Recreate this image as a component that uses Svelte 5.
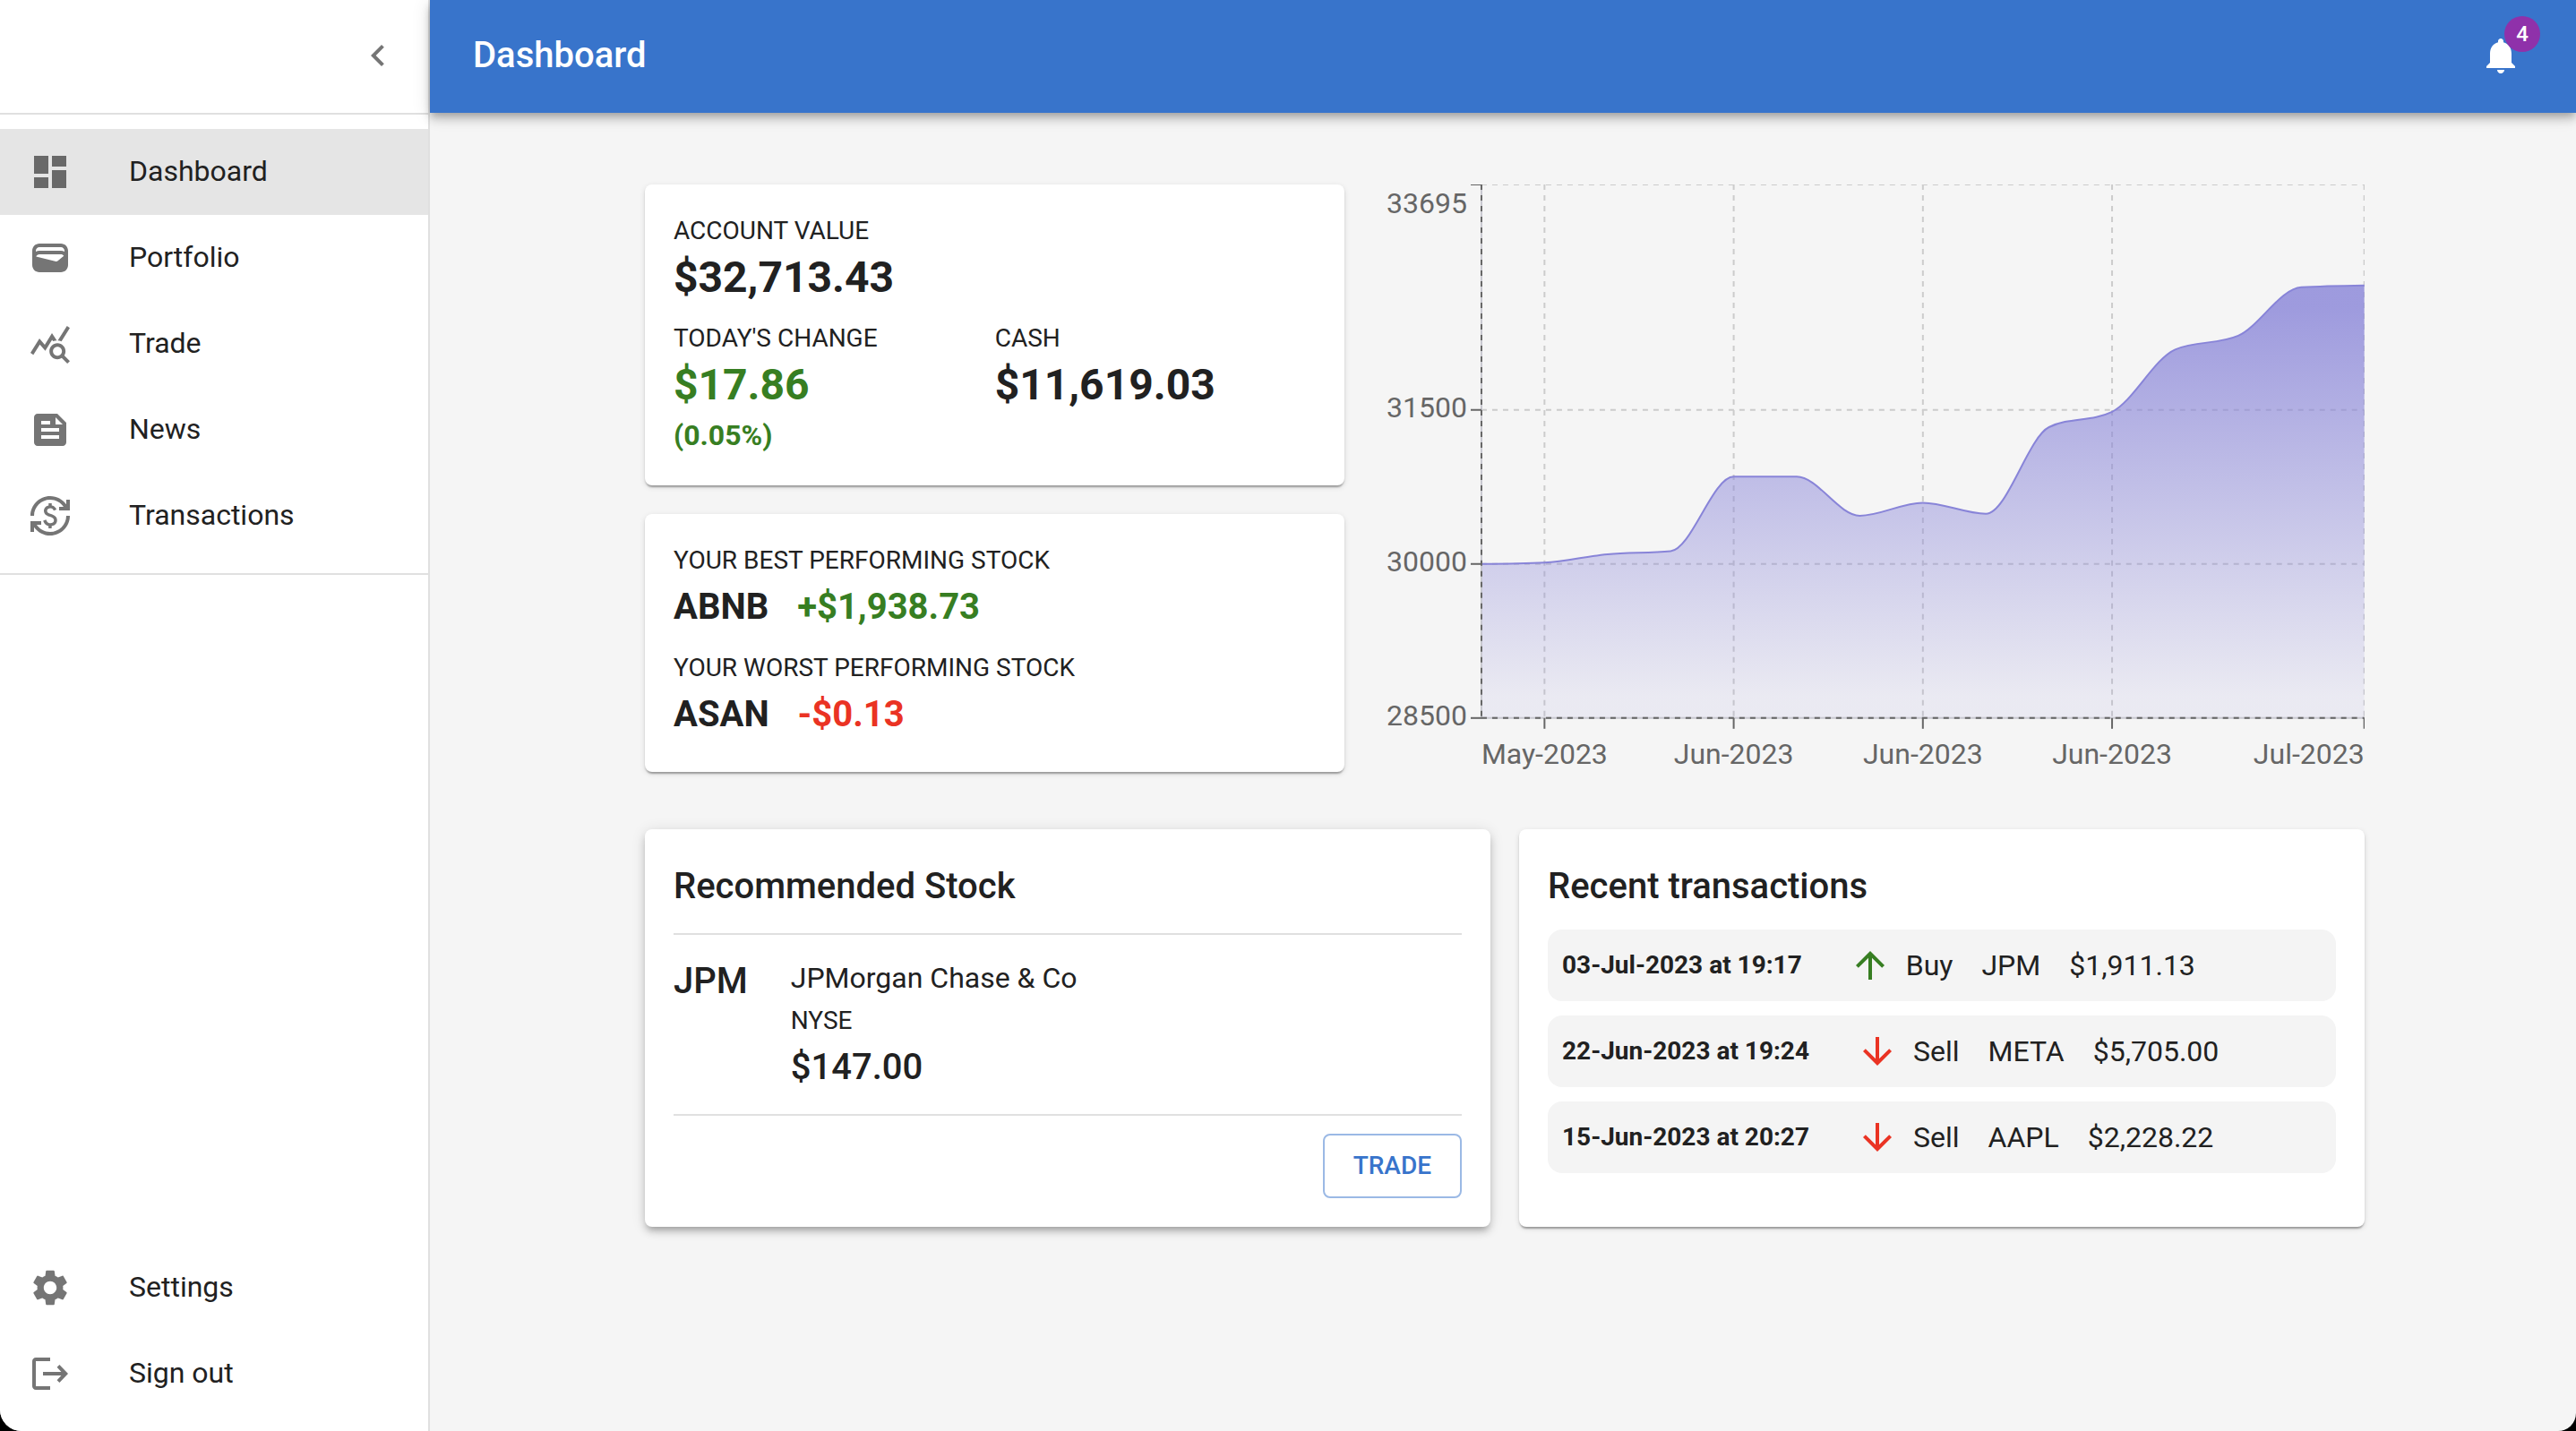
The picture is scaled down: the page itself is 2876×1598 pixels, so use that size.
<script>
  const icons = {
    dashboard: 'M3 13h8V3H3v10zm0 8h8v-6H3v6zm10 0h8V11h-8v10zm0-18v6h8V3h-8z',
    wallet:
      'M18 4H6C3.790 4 2 5.790 2 8v8c0 2.210 1.790 4 4 4h12c2.210 0 4-1.790 4-4V8c0-2.210-1.790-4-4-4zm-1.860 9.770c-.24.2-.57.28-.88.2L4.150 11.250C4.450 10.520 5.160 10 6 10h12c.67 0 1.260.34 1.630.84l-3.490 2.930zM6 6h12c1.100 0 2 .9 2 2v.550c-.59-.34-1.270-.550-2-.550H6c-.73 0-1.410.21-2 .550V8c0-1.100.9-2 2-2z',
    trade:
      'M19.880 18.470c.44-.7.700-1.510.700-2.390 0-2.490-2.010-4.500-4.500-4.500s-4.500 2.010-4.500 4.500 2.010 4.500 4.490 4.500c.88 0 1.700-.260 2.390-.700L21.580 23 23 21.580l-3.120-3.110zm-3.800.110c-1.380 0-2.500-1.120-2.500-2.500s1.120-2.500 2.500-2.500 2.500 1.120 2.500 2.500-1.120 2.500-2.500 2.500zm-.360-8.500c-.740.020-1.450.180-2.100.450l-.550-.830-3.800 6.180-3.010-3.520-3.630 5.810L1 17l5-8 3 3.500L13 6l2.720 4.080zm2.590.5c-.640-.28-1.330-.450-2.050-.490L21.380 2 23 3.180l-4.690 7.400z',
    news: 'M16 3H5c-1.100 0-2 .9-2 2v14c0 1.100.9 2 2 2h14c1.100 0 2-.9 2-2V8l-5-5zM7 7h5v2H7V7zm10 10H7v-2h10v2zm0-4H7v-2h10v2zm-2-4V5l4 4h-4z',
    transactions:
      'M12.890 11.100c-1.780-.590-2.640-.960-2.640-1.900 0-1.020 1.110-1.390 1.810-1.390 1.310 0 1.790.990 1.900 1.340l1.580-.670c-.150-.440-.820-1.910-2.660-2.230V5h-1.750v1.260c-2.600.560-2.620 2.850-2.620 2.960 0 2.270 2.250 2.910 3.350 3.310 1.580.560 2.280 1.070 2.280 2.030 0 1.130-1.050 1.610-1.980 1.610-1.820 0-2.340-1.870-2.400-2.090l-1.660.670c.630 2.190 2.280 2.780 2.990 2.960V19h1.750v-1.240c.520-.090 3.020-.590 3.020-3.220.010-1.390-.6-2.610-2.970-3.440zM3 21H1v-6h6v2H4.520c1.610 2.410 4.360 4 7.480 4 4.970 0 9-4.030 9-9h2c0 6.080-4.920 11-11 11-3.720 0-7.010-1.850-9-4.670V21zM1 12C1 5.920 5.920 1 12 1c3.720 0 7.010 1.850 9 4.670V3h2v6h-6V7h2.480C17.870 4.590 15.120 3 12 3c-4.970 0-9 4.030-9 9H1z',
    settings:
      'M19.140 12.940c.04-.3.060-.61.060-.94 0-.32-.020-.640-.070-.940l2.030-1.580c.18-.14.230-.41.120-.61l-1.920-3.320c-.12-.22-.37-.29-.59-.22l-2.390.96c-.5-.38-1.030-.7-1.620-.94l-.36-2.540c-.040-.24-.24-.41-.48-.41h-3.840c-.24 0-.43.17-.47.41l-.36 2.540c-.59.24-1.130.57-1.620.94l-2.390-.96c-.22-.080-.47 0-.59.22L2.740 8.870c-.12.21-.080.47.12.61l2.030 1.580c-.050.3-.090.630-.090.940s.020.640.070.940l-2.030 1.580c-.18.14-.23.41-.12.61l1.920 3.320c.12.22.37.29.59.22l2.390-.96c.5.38 1.030.7 1.620.94l.36 2.540c.050.24.24.41.48.41h3.840c.24 0 .44-.17.47-.41l.36-2.540c.59-.24 1.130-.56 1.620-.94l2.390.96c.22.080.47 0 .59-.22l1.920-3.320c.12-.22.070-.47-.12-.61l-2.010-1.580zM12 15.600c-1.980 0-3.600-1.620-3.600-3.600s1.620-3.600 3.600-3.600 3.600 1.620 3.600 3.600-1.620 3.600-3.600 3.600z',
    signout: 'M4 3h8v2H4v14h8v2H4c-1.100 0-2-.9-2-2V5c0-1.100.9-2 2-2zM17.200 7L22 12l-4.800 5-1.400-1.400L18.200 13H8v-2h10.200l-2.400-2.600z',
    chevron: 'M15.410 7.410 14 6l-6 6 6 6 1.410-1.410L10.830 12z',
    bell: 'M12 22c1.100 0 2-.9 2-2h-4c0 1.100.89 2 2 2zm6-6v-5c0-3.070-1.640-5.640-4.500-6.320V4c0-.83-.67-1.500-1.500-1.500s-1.500.67-1.500 1.500v.68C7.630 5.360 6 7.920 6 11v5l-2 2v1h16v-1l-2-2z',
    up: 'm4 12 1.410 1.410L11 7.830V20h2V7.830l5.580 5.590L20 12l-8-8-8 8z',
    down: 'm20 12-1.410-1.410L13 16.170V4h-2v12.170l-5.580-5.590L4 12l8 8 8-8z'
  };

  const mainNav = [
    { label: 'Dashboard', icon: 'dashboard', active: true },
    { label: 'Portfolio', icon: 'wallet' },
    { label: 'Trade', icon: 'trade' },
    { label: 'News', icon: 'news' },
    { label: 'Transactions', icon: 'transactions' }
  ];
  const footNav = [
    { label: 'Settings', icon: 'settings' },
    { label: 'Sign out', icon: 'signout' }
  ];

  const transactions = [
    { date: '03-Jul-2023 at 19:17', type: 'Buy', symbol: 'JPM', amount: '$1,911.13' },
    { date: '22-Jun-2023 at 19:24', type: 'Sell', symbol: 'META', amount: '$5,705.00' },
    { date: '15-Jun-2023 at 20:27', type: 'Sell', symbol: 'AAPL', amount: '$2,228.22' }
  ];

  // Account value history
  const values = [
    30000, 30014, 30095, 30125, 30850, 30850, 30470, 30596, 30489, 31332, 31482, 32088, 32222, 32695, 32713
  ];
  const chart = { width: 1107, height: 656, left: 121, bottom: 596, min: 28500, max: 33695 };
  const xAt = (i) => chart.left + ((chart.width - chart.left) * i) / (values.length - 1);
  const yAt = (v) => (chart.bottom * (chart.max - v)) / (chart.max - chart.min);

  const yTicks = [
    { value: 33695, dy: 32 },
    { value: 31500, dy: 8 },
    { value: 30000, dy: 8 },
    { value: 28500, dy: 8 }
  ];
  const xTicks = [
    { index: 1, label: 'May-2023' },
    { index: 4, label: 'Jun-2023' },
    { index: 7, label: 'Jun-2023' },
    { index: 10, label: 'Jun-2023' },
    { index: 14, label: 'Jul-2023', end: true }
  ];

  // Monotone cubic interpolation through evenly spaced points
  function monotone(points) {
    const n = points.length;
    const step = points[1][0] - points[0][0];
    const slopes = points.slice(1).map((p, i) => (p[1] - points[i][1]) / step);
    const tangents = points.map((_, i) => {
      if (i === 0 || i === n - 1) return 0;
      const a = slopes[i - 1];
      const b = slopes[i];
      return (Math.sign(a) + Math.sign(b)) * Math.min(Math.abs(a), Math.abs(b), Math.abs(a + b) / 4);
    });
    tangents[0] = (3 * slopes[0] - tangents[1]) / 2;
    tangents[n - 1] = (3 * slopes[n - 2] - tangents[n - 2]) / 2;
    let d = `M${points[0][0]},${points[0][1]}`;
    for (let i = 1; i < n; i++) {
      const [x0, y0] = points[i - 1];
      const [x1, y1] = points[i];
      const h = step / 3;
      d += `C${x0 + h},${y0 + h * tangents[i - 1]},${x1 - h},${y1 - h * tangents[i]},${x1},${y1}`;
    }
    return d;
  }
  const line = monotone(values.map((v, i) => [xAt(i), yAt(v)]));
  const area = `${line}V${chart.bottom}H${chart.left}Z`;
</script>

{#snippet icon(name)}
  <svg class="icon" viewBox="0 0 24 24" aria-hidden="true"><path d={icons[name]} /></svg>
{/snippet}

{#snippet navList(items)}
  <ul class="nav-list">
    {#each items as item}
      <li>
        <a class="nav-item" class:active={item.active} href="#{item.icon}">
          {@render icon(item.icon)}
          <span>{item.label}</span>
        </a>
      </li>
    {/each}
  </ul>
{/snippet}

<div class="app">
  <nav class="sidebar">
    <div class="sidebar-head">
      <button class="icon-button" aria-label="Collapse menu">{@render icon('chevron')}</button>
    </div>
    {@render navList(mainNav)}
    <div class="nav-foot">{@render navList(footNav)}</div>
  </nav>

  <div class="page">
    <header class="appbar">
      <h1>Dashboard</h1>
      <button class="icon-button bell" aria-label="Notifications">
        {@render icon('bell')}
        <span class="badge">4</span>
      </button>
    </header>

    <main>
      <div class="grid">
        <div class="summary">
          <section class="card stack">
            <div>
              <p class="label">ACCOUNT VALUE</p>
              <p class="value">$32,713.43</p>
            </div>
            <div class="halves">
              <div>
                <p class="label">TODAY'S CHANGE</p>
                <p class="value gain">$17.86</p>
                <p class="percent gain">(0.05%)</p>
              </div>
              <div>
                <p class="label">CASH</p>
                <p class="value">$11,619.03</p>
              </div>
            </div>
          </section>

          <section class="card stack">
            <div>
              <p class="label">YOUR BEST PERFORMING STOCK</p>
              <p class="stock"><span>ABNB</span><span class="gain">+$1,938.73</span></p>
            </div>
            <div>
              <p class="label">YOUR WORST PERFORMING STOCK</p>
              <p class="stock"><span>ASAN</span><span class="loss">-$0.13</span></p>
            </div>
          </section>
        </div>

        <svg class="chart" viewBox="0 0 {chart.width} {chart.height}" role="img" aria-label="Account value over time">
          <defs>
            <linearGradient id="fill" x1="0" y1="0" x2="0" y2="1">
              <stop offset="5%" stop-color="#8884d8" stop-opacity="0.8" />
              <stop offset="95%" stop-color="#8884d8" stop-opacity="0.1" />
            </linearGradient>
          </defs>
          <g class="gridlines">
            {#each yTicks as t}
              <line x1={chart.left} x2={chart.width} y1={yAt(t.value)} y2={yAt(t.value)} />
            {/each}
            {#each xTicks as t}
              <line x1={xAt(t.index)} x2={xAt(t.index)} y1="0" y2={chart.bottom} />
            {/each}
          </g>
          <path class="area" d={area} />
          <path class="line" d={line} />
          <g class="axes">
            <path class="base" d="M{chart.left},0V{chart.bottom}H{chart.width}" />
            <line class="dashed" x1={chart.left} x2={chart.width} y1={chart.bottom} y2={chart.bottom} />
            <line class="dashed" x1={chart.left} x2={chart.left} y1="0" y2={chart.bottom} />
            {#each yTicks as t}
              <line x1={chart.left - 12} x2={chart.left} y1={yAt(t.value)} y2={yAt(t.value)} />
              <text x={chart.left - 16} y={yAt(t.value) + t.dy} text-anchor="end">{t.value}</text>
            {/each}
            {#each xTicks as t}
              <line x1={xAt(t.index)} x2={xAt(t.index)} y1={chart.bottom} y2={chart.bottom + 12} />
              <text x={xAt(t.index)} y={chart.bottom + 51} text-anchor={t.end ? 'end' : 'middle'}>{t.label}</text>
            {/each}
          </g>
        </svg>
      </div>

      <div class="grid halves-row">
        <section class="card raised">
          <h2>Recommended Stock</h2>
          <div class="recommendation">
            <p class="ticker">JPM</p>
            <div>
              <p class="company">JPMorgan Chase &amp; Co</p>
              <p class="label">NYSE</p>
              <p class="ticker">$147.00</p>
            </div>
          </div>
          <div class="actions"><button class="trade">TRADE</button></div>
        </section>

        <section class="card">
          <h2>Recent transactions</h2>
          <ul class="transactions">
            {#each transactions as t}
              <li>
                <span class="date">{t.date}</span>
                <span class="kind">
                  <span class="arrow" class:gain={t.type === 'Buy'} class:loss={t.type === 'Sell'}>
                    {@render icon(t.type === 'Buy' ? 'up' : 'down')}
                  </span>
                  {t.type}
                </span>
                <span>{t.symbol}</span>
                <span>{t.amount}</span>
              </li>
            {/each}
          </ul>
        </section>
      </div>
    </main>
  </div>
</div>

<style>
  :global(body) {
    margin: 0;
    background: #000;
  }
  .app {
    display: flex;
    min-height: 100vh;
    overflow: hidden;
    border-radius: 0 0 20px 24px;
    background: #f5f5f5;
    color: #212121;
    font-family: Roboto, 'Liberation Sans', sans-serif;
    font-size: 32px;
    line-height: 48px;
  }
  .app :global(*) {
    box-sizing: border-box;
  }
  h1,
  h2,
  p,
  ul {
    margin: 0;
    padding: 0;
  }
  ul {
    list-style: none;
  }
  button {
    font: inherit;
    cursor: pointer;
  }
  .icon {
    display: block;
    flex: none;
    width: 48px;
    height: 48px;
    fill: currentColor;
  }
  .icon-button {
    padding: 16px;
    border: 0;
    background: none;
    color: inherit;
  }

  .sidebar {
    display: flex;
    flex-direction: column;
    flex: none;
    width: 480px;
    border-right: 2px solid #e0e0e0;
    background: #fff;
  }
  .sidebar-head {
    display: flex;
    justify-content: flex-end;
    align-items: center;
    height: 128px;
    padding: 0 16px 2px 0;
    border-bottom: 2px solid #e0e0e0;
    color: #757575;
  }
  .nav-list {
    padding: 16px 0;
    border-bottom: 2px solid #e0e0e0;
  }
  .nav-foot {
    margin-top: auto;
  }
  .nav-foot .nav-list {
    border-bottom: 0;
  }
  .nav-item {
    display: flex;
    align-items: center;
    gap: 64px;
    height: 96px;
    padding: 0 32px;
    color: inherit;
    text-decoration: none;
  }
  .nav-item span {
    padding-bottom: 2px;
  }
  .nav-item .icon {
    color: #757575;
  }
  .nav-item.active {
    background: #e5e5e5;
  }
  .nav-item.active .icon {
    color: #696969;
  }

  .page {
    flex: 1;
    min-width: 0;
  }
  .appbar {
    position: relative;
    display: flex;
    justify-content: space-between;
    align-items: center;
    height: 126px;
    padding: 0 44px 2px 48px;
    background: #3874cb;
    color: #fff;
    box-shadow:
      0 4px 8px -2px rgba(0, 0, 0, 0.2),
      0 8px 10px 0 rgba(0, 0, 0, 0.14),
      0 2px 20px 0 rgba(0, 0, 0, 0.12);
  }
  h1,
  h2,
  .ticker {
    font-size: 40px;
    font-weight: 500;
    line-height: 64px;
  }
  .bell {
    position: relative;
  }
  .badge {
    position: absolute;
    top: -4px;
    right: -4px;
    width: 40px;
    height: 40px;
    border-radius: 50%;
    background: #8f31aa;
    font-size: 24px;
    font-weight: 500;
    line-height: 40px;
    text-align: center;
  }

  main {
    display: flex;
    flex-direction: column;
    gap: 64px;
    max-width: 1924px;
    margin: 0 auto;
    padding: 80px 0 0 4px;
  }
  .grid {
    display: grid;
    grid-template-columns: repeat(12, minmax(0, 1fr));
    gap: 32px;
  }
  .summary {
    display: flex;
    flex-direction: column;
    grid-column: span 5;
    gap: 32px;
  }
  .chart {
    display: block;
    grid-column: span 7;
    width: 100%;
  }
  .halves-row .card {
    grid-column: span 6;
  }
  .card {
    padding: 32px;
    border-radius: 8px;
    background: #fff;
    box-shadow:
      0 4px 2px -2px rgba(0, 0, 0, 0.2),
      0 2px 2px 0 rgba(0, 0, 0, 0.14),
      0 2px 6px 0 rgba(0, 0, 0, 0.12);
  }
  .raised {
    box-shadow:
      0 6px 6px -4px rgba(0, 0, 0, 0.2),
      0 6px 8px 0 rgba(0, 0, 0, 0.14),
      0 2px 16px 0 rgba(0, 0, 0, 0.12);
  }
  .stack {
    display: flex;
    flex-direction: column;
    gap: 16px;
  }
  .halves {
    display: grid;
    grid-template-columns: 1fr 1fr;
  }
  .label {
    font-size: 28px;
    line-height: 40px;
  }
  .value {
    font-size: 48px;
    font-weight: 700;
    line-height: 64px;
  }
  .percent {
    font-weight: 700;
  }
  .stock {
    display: flex;
    gap: 32px;
    font-size: 40px;
    font-weight: 700;
    line-height: 64px;
  }
  .gain {
    color: #377e22;
  }
  .loss {
    color: #ea3323;
  }

  .gridlines line {
    stroke: #ccc;
    stroke-width: 2px;
    stroke-dasharray: 6 6;
  }
  .area {
    fill: url(#fill);
  }
  .line {
    fill: none;
    stroke: #8884d8;
    stroke-width: 2px;
  }
  .axes .base {
    fill: none;
    stroke: #c8c8d0;
    stroke-width: 2px;
  }
  .axes line {
    stroke: #666;
    stroke-width: 2px;
  }
  .axes .dashed {
    stroke-dasharray: 6 6;
  }
  .axes text {
    fill: #666;
    font-size: 32px;
  }

  .recommendation {
    display: flex;
    gap: 48px;
    margin: 20px 0;
    padding: 20px 0;
    border: solid #e0e0e0;
    border-width: 2px 0;
  }
  .company {
    line-height: 56px;
  }
  .actions {
    display: flex;
    justify-content: flex-end;
  }
  .trade {
    height: 72px;
    padding: 0 32px;
    border: 2px solid #9bb9e5;
    border-radius: 8px;
    background: #fff;
    color: #3874cb;
    font-size: 28px;
    font-weight: 500;
  }

  .transactions {
    display: flex;
    flex-direction: column;
    gap: 16px;
    margin-top: 16px;
  }
  .transactions li {
    display: flex;
    align-items: center;
    gap: 32px;
    height: 80px;
    padding: 0 16px;
    border-radius: 16px;
    background: #f4f4f4;
  }
  .date {
    margin-right: 20px;
    font-size: 28px;
    font-weight: 700;
  }
  .kind {
    display: flex;
    align-items: center;
    gap: 16px;
  }
</style>
